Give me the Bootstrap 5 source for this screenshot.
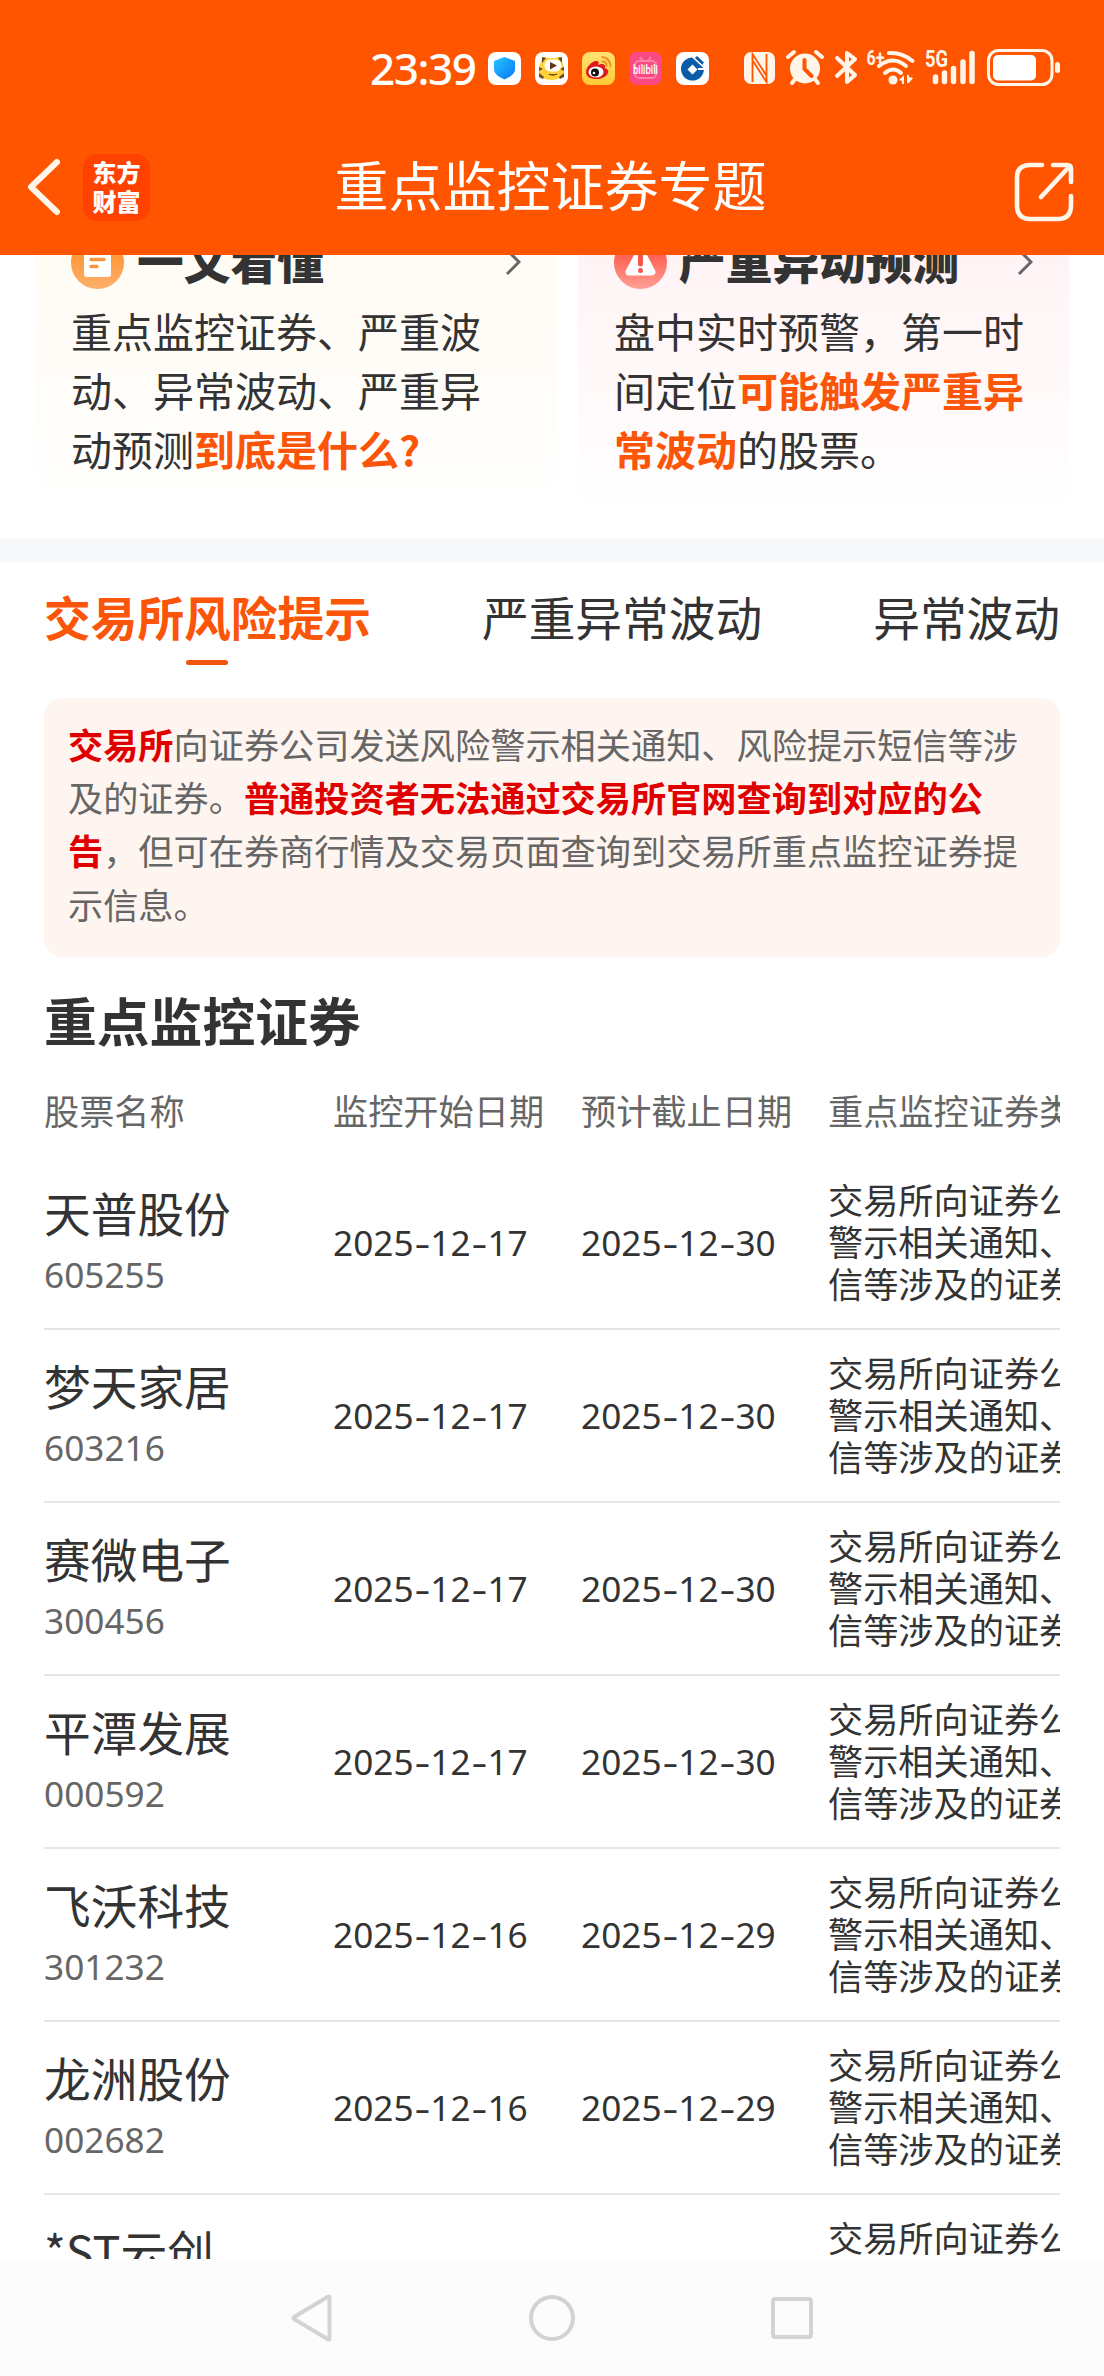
<!DOCTYPE html>
<html lang="zh-CN">
<head>
<meta charset="utf-8">
<meta name="viewport" content="width=device-width, initial-scale=1">
<title>重点监控证券专题</title>
<link href="https://cdn.jsdelivr.net/npm/bootstrap@5.3.0/dist/css/bootstrap.min.css" rel="stylesheet">
<style>
html,body{height:2376px;overflow:hidden}
body{font-family:"Noto Sans CJK SC","Noto Sans",sans-serif;color:#333;background:#fff}
svg{display:block;flex:none}
.top-area{height:255px;background:#f50}
.status-line{height:112px;padding:25px 44px 0 370px}
.clock{font:500 44px/84px "Noto Sans",sans-serif;height:86px;width:118px;letter-spacing:-1.4px;white-space:nowrap}
.title-line{height:143px;padding:0 29px 0 26px}
.title-line .side{width:150px}
.page-title{font-size:54px;line-height:80px;margin-top:1px}
.brand-tile{width:67px;height:67px;border-radius:14px;background:#ff4200;font-weight:900;font-size:24px;line-height:29px;padding-top:3px;margin-left:23px}
.scroll-area{height:2004px}
.promo-row{height:307px;margin-top:-23px;padding:0 35px;gap:21px}
.promo{height:280px;padding:0 36px}
.promo-a{background:linear-gradient(#fffbf4,#fffdf9 60%,#fff)}
.promo-b{background:linear-gradient(#fff3f4,#fff8f9 50%,#fff)}
.promo-head{height:60px;font-size:46.7px;font-weight:900;line-height:60px}
.promo-head span{margin-top:-6px}
.promo-text{font-size:41px;line-height:59px;margin-top:9px;width:420px}
.hot{color:#fa5508;font-weight:700}
.divider{height:23px;background:#f7f8fa}
.tab-row{height:136px;padding:24px 44px 0;font-size:46.7px;line-height:60px}
.tab-bar{width:42px;height:5px;border-radius:3px;background:#f0560f;margin:14px auto 0}
.notice{height:259px;margin:0 44px;padding:19px 24px;border-radius:18px;background:#fff5f0;color:#666;font-size:35.2px;line-height:53.2px}
.notice b{color:#e00000}
.section-title{height:110px;margin:0;padding:16px 44px 0;font-size:52.8px;font-weight:700;line-height:92px}
.sheet{margin:0 44px;overflow:hidden}
.sheet-row{width:1216px;height:173px;border-bottom:2px solid #e6e6e6;font-size:35.2px}
.sheet-head{width:1216px;height:90px;color:#666;font-size:35.2px;padding-bottom:3px}
.c1{width:289px}.c2{width:248px}.c3{width:247px}.c4{width:430px;line-height:42.2px}
.sheet-row .c4{margin-top:-3px}
.stock{font-size:46.7px;line-height:60px;margin-top:-1px}
.code,.date{font-family:"Noto Sans",sans-serif;font-size:35.2px}
.code{color:#666;line-height:56px;margin-top:4px}
.date i{display:inline-block;width:16.8px;text-align:center;font-style:normal;transform:scaleX(1.4)}
.sys-nav{height:117px;background:#fcfcfc;padding:0 291px}
</style>
</head>
<body class="d-flex flex-column">
<header class="top-area text-white">
  <div class="status-line d-flex align-items-center">
    <div class="clock">23:39</div>
    <div class="d-flex" style="gap:14px">
      <svg width="33" height="33" viewBox="0 0 33 33"><defs><linearGradient id="sh" x1="0" y1="0" x2="1" y2="1"><stop offset="0" stop-color="#27c4ff"/><stop offset="1" stop-color="#0879f5"/></linearGradient></defs><rect width="33" height="33" rx="8" fill="#fff"/><path d="M16.500 5 27 9v8c0 5-5 8-10.500 10.500C11 25 6 22 6 17V9z" fill="url(#sh)"/></svg>
      <svg width="33" height="33" viewBox="0 0 33 33"><rect width="33" height="33" rx="8" fill="#fff"/><path d="M7 6q2-2 5 0h9q3-2 5 0 1 4 3 9v6q-2 7-12.500 7T4 21v-6Q6 10 7 6z" fill="#ffd338"/><path d="M7 5l4 1-4 5zM27 5l-4 1 4 5zM4 15l4 2-4 2zM29 15l-4 2 4 2zM4 21l5 4-1 2-4-2zM29 21l-5 4 1 2 4-2z" fill="#6b4a20"/><rect x="9.500" y="7.500" width="17" height="12" rx="6" fill="#fff"/><path d="M15 10l7 3.500-7 4z" fill="#5c351b"/><path d="M14 22q3 2 8 0" stroke="#5c351b" stroke-width="1.300" fill="none"/></svg>
      <svg width="33" height="33" viewBox="0 0 33 33"><defs><linearGradient id="wb" x1="0" y1="0" x2="0" y2="1"><stop offset="0" stop-color="#ffe173"/><stop offset="1" stop-color="#ffcb33"/></linearGradient></defs><rect width="33" height="33" rx="8" fill="url(#wb)"/><path d="M4 20c0-5 6-11 10-11 3 0 3 2 2 4 4-2 8-1 7 3 3 1 4 3 3 5-2 4-7 6-12 6S4 25 4 20z" fill="#e0181f"/><ellipse cx="14" cy="20" rx="7.500" ry="5.500" fill="#fff"/><circle cx="13" cy="20.500" r="4" fill="#111"/><circle cx="12" cy="21" r="1.300" fill="#fff"/><path d="M20.500 5a9 9 0 0 1 8 9M20.500 9.500q4 0 4 4" stroke="#f4911e" stroke-width="2.200" fill="none" stroke-linecap="round"/></svg>
      <svg width="33" height="33" viewBox="0 0 33 33"><rect width="33" height="33" rx="8" fill="#fb4a83"/><rect x="6" y="9" width="21" height="17" rx="4" fill="none" stroke="#ff82a9" stroke-width="2"/><path d="M11 5l3 4M22 5l-3 4" stroke="#ff82a9" stroke-width="2"/><text x="16.500" y="22" font-family="Roboto,sans-serif" font-size="12" font-weight="500" fill="#fff" text-anchor="middle" textLength="25" lengthAdjust="spacingAndGlyphs">bilibili</text></svg>
      <svg width="33" height="33" viewBox="0 0 33 33"><rect width="33" height="33" rx="8" fill="#fff"/><circle cx="16.500" cy="17" r="11.500" fill="#0a5ca8"/><path d="M16.500 4.500 29 16" stroke="#fff" stroke-width="2"/><path d="M20 5l7 6.500" stroke="#0a5ca8" stroke-width="3"/><path d="M16.500 12.500l5 5-5 5-5-5z" fill="#fff"/><path d="M22 17h8" stroke="#fff" stroke-width="2"/></svg>
    </div>
    <svg width="320" height="44" viewBox="740 46 320 44" style="margin-left:31px;margin-top:-2px" fill="#fff5e8">
      <rect x="744" y="52" width="31" height="32" rx="7"/><path d="M752.500 82V54l13.500 21M753 61l13.500 21V54" fill="none" stroke="#f50" stroke-width="1.800"/>
      <circle cx="805" cy="68.500" r="15"/><path d="M788 57l6-5M822 57l-6-5M792 83l4-5M818 83l-4-5" stroke="#fff5e8" stroke-width="4" stroke-linecap="round"/><path d="M804.500 60v9l7 7" fill="none" stroke="#f50" stroke-width="4" stroke-linecap="round"/>
      <path d="M837 58l18 17-8 7V53l8 6-18 17" fill="none" stroke="#fff5e8" stroke-width="4" stroke-linecap="round" stroke-linejoin="round"/>
      <text x="866.500" y="65" font-family="Roboto,sans-serif" font-size="21" font-weight="700" textLength="18" lengthAdjust="spacingAndGlyphs">6+</text>
      <g fill="none" stroke="#fff5e8" stroke-width="4" stroke-linecap="round"><path d="M889 53q13-1 23.500 8"/><path d="M879 66q14-11 27 0"/><path d="M885 73q8-7 16 0"/></g><circle cx="893" cy="80" r="4.500"/><path d="M899 80l5-5v9h-2v-3zM907 75h2v2l4 1-4 5h-2z"/>
      <text x="925" y="67" font-family="Roboto,sans-serif" font-size="23" font-weight="700" textLength="23" lengthAdjust="spacingAndGlyphs">5G</text>
      <path d="M935.500 77v4.500M944.500 73v8.500M953.500 68.500v13M963 62v19.500M972 53.500v28" stroke="#fff5e8" stroke-width="5.500" stroke-linecap="round"/>
      <rect x="988.500" y="50.500" width="63.500" height="34" rx="10" fill="none" stroke="#fff5e8" stroke-width="3"/><rect x="993" y="55" width="43" height="25.500" rx="5" fill="#fff"/><rect x="1055" y="62" width="5" height="11" rx="2.500"/>
    </svg>
  </div>
  <div class="title-line d-flex align-items-center justify-content-between">
    <div class="side d-flex align-items-center" style="margin-top:7px">
      <svg width="34" height="58" viewBox="0 0 34 58"><path d="M31 4 5 29l26 25" fill="none" stroke="#fff5e8" stroke-width="6" stroke-linecap="round" stroke-linejoin="round"/></svg>
      <div class="brand-tile text-center">东方<br>财富</div>
    </div>
    <div class="page-title">重点监控证券专题</div>
    <div class="side d-flex justify-content-end"><svg width="62" height="62" viewBox="0 0 62 62" style="margin-top:16px"><path d="M29 4H17Q4 4 4 17v27q0 14 13 14h28q13 0 13-14V35M40 4h14q4 0 4 4v13M56 6 28 36" fill="none" stroke="#fff5e8" stroke-width="4.600" stroke-linecap="round"/></svg></div>
  </div>
</header>
<main class="scroll-area overflow-hidden">
  <section class="promo-row d-flex">
    <div class="promo promo-a" style="width:522px">
      <div class="promo-head d-flex align-items-center">
        <svg width="53" height="53" viewBox="0 0 53 53"><defs><linearGradient id="oc" x1="0" y1="0" x2="0" y2="1"><stop offset="0" stop-color="#ff8a1c"/><stop offset="1" stop-color="#fdb06c"/></linearGradient></defs><circle cx="26.500" cy="26.500" r="26.500" fill="url(#oc)"/><rect x="13" y="11" width="27" height="30" rx="3" fill="#fff"/><path d="M20 23.500h13M20 30.500h6" stroke="#f6963f" stroke-width="3.500" stroke-linecap="round"/></svg>
        <span style="margin-left:13px">一文看懂</span>
        <svg class="ms-auto" width="16" height="30" viewBox="0 0 16 30"><path d="M2 3l12 12L2 27" fill="none" stroke="#666" stroke-width="3"/></svg>
      </div>
      <div class="promo-text">重点监控证券、严重波动、异常波动、严重异动预测<span class="hot">到底是什么?</span></div>
    </div>
    <div class="promo promo-b" style="width:491px">
      <div class="promo-head d-flex align-items-center">
        <svg width="53" height="53" viewBox="0 0 53 53"><defs><linearGradient id="rc" x1="0" y1="0" x2="0" y2="1"><stop offset="0" stop-color="#ff3d2e"/><stop offset="1" stop-color="#ffa096"/></linearGradient></defs><circle cx="26.500" cy="26.500" r="26.500" fill="url(#rc)"/><path d="M26.500 14 38 36H15z" fill="#fff" stroke="#fff" stroke-width="7" stroke-linejoin="round"/><path d="M26.500 19v9" stroke="#f4584c" stroke-width="5" stroke-linecap="round"/><circle cx="26.500" cy="34.500" r="2.500" fill="#f4584c"/></svg>
        <span style="margin-left:12px">严重异动预测</span>
        <svg class="ms-auto" width="16" height="30" viewBox="0 0 16 30"><path d="M2 3l12 12L2 27" fill="none" stroke="#666" stroke-width="3"/></svg>
      </div>
      <div class="promo-text">盘中实时预警，第一时间定位<span class="hot">可能触发严重异常波动</span>的股票。</div>
    </div>
  </section>
  <div class="divider"></div>
  <nav class="tab-row d-flex justify-content-between">
    <div class="hot">交易所风险提示<div class="tab-bar"></div></div>
    <div>严重异常波动</div>
    <div>异常波动</div>
  </nav>
  <section class="notice"><b>交易所</b>向证券公司发送风险警示相关通知、风险提示短信等涉及的证券。<b>普通投资者无法通过交易所官网查询到对应的公告</b>，但可在券商行情及交易页面查询到交易所重点监控证券提示信息。</section>
  <h2 class="section-title">重点监控证券</h2>
  <section class="sheet">
    <div class="sheet-head d-flex align-items-center"><div class="c1">股票名称</div><div class="c2">监控开始日期</div><div class="c3">预计截止日期</div><div class="c4">重点监控证券类型</div></div>
    <div class="sheet-row d-flex align-items-center"><div class="c1"><div class="stock">天普股份</div><div class="code">605255</div></div><div class="c2 date">2025<i>-</i>12<i>-</i>17</div><div class="c3 date">2025<i>-</i>12<i>-</i>30</div><div class="c4">交易所向证券公司发送风险警示相关通知、风险提示短信等涉及的证券</div></div>
    <div class="sheet-row d-flex align-items-center"><div class="c1"><div class="stock">梦天家居</div><div class="code">603216</div></div><div class="c2 date">2025<i>-</i>12<i>-</i>17</div><div class="c3 date">2025<i>-</i>12<i>-</i>30</div><div class="c4">交易所向证券公司发送风险警示相关通知、风险提示短信等涉及的证券</div></div>
    <div class="sheet-row d-flex align-items-center"><div class="c1"><div class="stock">赛微电子</div><div class="code">300456</div></div><div class="c2 date">2025<i>-</i>12<i>-</i>17</div><div class="c3 date">2025<i>-</i>12<i>-</i>30</div><div class="c4">交易所向证券公司发送风险警示相关通知、风险提示短信等涉及的证券</div></div>
    <div class="sheet-row d-flex align-items-center"><div class="c1"><div class="stock">平潭发展</div><div class="code">000592</div></div><div class="c2 date">2025<i>-</i>12<i>-</i>17</div><div class="c3 date">2025<i>-</i>12<i>-</i>30</div><div class="c4">交易所向证券公司发送风险警示相关通知、风险提示短信等涉及的证券</div></div>
    <div class="sheet-row d-flex align-items-center"><div class="c1"><div class="stock">飞沃科技</div><div class="code">301232</div></div><div class="c2 date">2025<i>-</i>12<i>-</i>16</div><div class="c3 date">2025<i>-</i>12<i>-</i>29</div><div class="c4">交易所向证券公司发送风险警示相关通知、风险提示短信等涉及的证券</div></div>
    <div class="sheet-row d-flex align-items-center"><div class="c1"><div class="stock">龙洲股份</div><div class="code">002682</div></div><div class="c2 date">2025<i>-</i>12<i>-</i>16</div><div class="c3 date">2025<i>-</i>12<i>-</i>29</div><div class="c4">交易所向证券公司发送风险警示相关通知、风险提示短信等涉及的证券</div></div>
    <div class="sheet-row d-flex align-items-center"><div class="c1"><div class="stock">*ST云创</div><div class="code">&nbsp;</div></div><div class="c2"></div><div class="c3"></div><div class="c4">交易所向证券公司发送风险警示相关通知、风险提示短信等涉及的证券</div></div>
  </section>
</main>
<footer class="sys-nav d-flex align-items-center justify-content-between">
  <svg width="42" height="48" viewBox="0 0 42 48"><path d="M38.500 3v42q-1 1-2 0L3 25q-1-1 0-2L36.500 3q1-1 2 0z" fill="none" stroke="#d3d3d3" stroke-width="4" stroke-linejoin="round"/></svg>
  <svg width="46" height="46" viewBox="0 0 46 46"><circle cx="23" cy="23" r="21" fill="none" stroke="#d3d3d3" stroke-width="4"/></svg>
  <svg width="42" height="42" viewBox="0 0 42 42"><rect x="2" y="2" width="38" height="38" rx="2" fill="none" stroke="#d3d3d3" stroke-width="4"/></svg>
</footer>
<script src="https://cdn.jsdelivr.net/npm/bootstrap@5.3.0/dist/js/bootstrap.bundle.min.js"></script>
</body>
</html>
